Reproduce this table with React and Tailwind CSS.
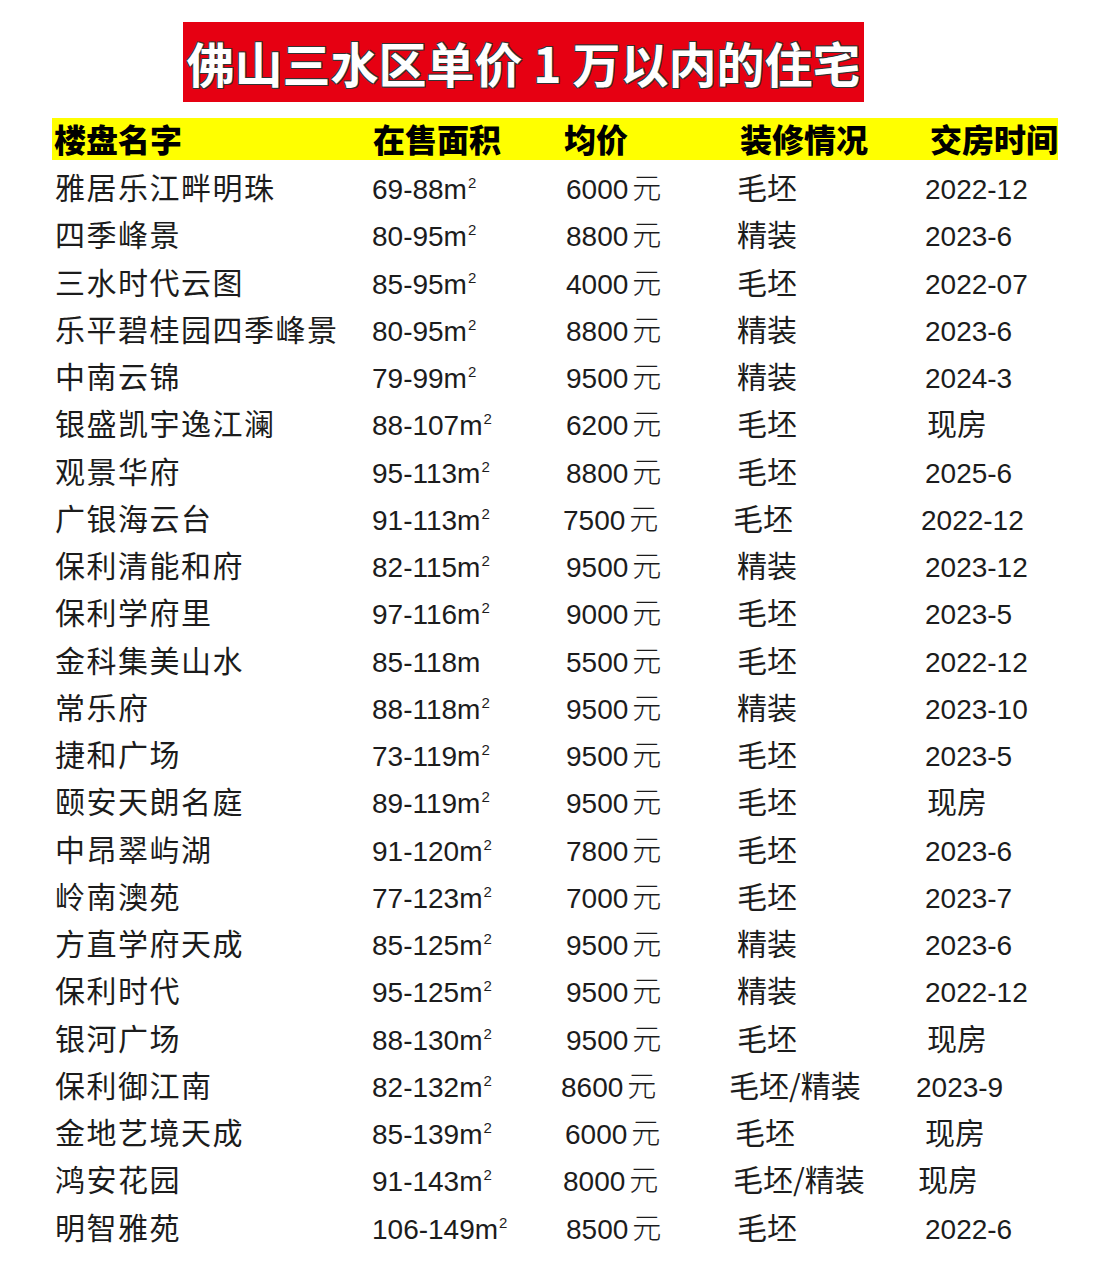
import React from 'react'

// 佛山三水区单价 1 万以内的住宅 — listing table
const rows = [
  { name: '雅居乐江畔明珠', area: '69-88m²', price: '6000', deco: '毛坯', date: '2022-12' },
  { name: '四季峰景', area: '80-95m²', price: '8800', deco: '精装', date: '2023-6' },
  { name: '三水时代云图', area: '85-95m²', price: '4000', deco: '毛坯', date: '2022-07' },
  { name: '乐平碧桂园四季峰景', area: '80-95m²', price: '8800', deco: '精装', date: '2023-6' },
  { name: '中南云锦', area: '79-99m²', price: '9500', deco: '精装', date: '2024-3' },
  { name: '银盛凯宇逸江澜', area: '88-107m²', price: '6200', deco: '毛坯', date: '现房', dateCls: 'ml-[2px]' },
  { name: '观景华府', area: '95-113m²', price: '8800', deco: '毛坯', date: '2025-6' },
  { name: '广银海云台', area: '91-113m²', price: '7500', deco: '毛坯', date: '2022-12', priceCls: '-ml-[3px]', decoCls: '-ml-[4px]', dateCls: '-ml-[4px]' },
  { name: '保利清能和府', area: '82-115m²', price: '9500', deco: '精装', date: '2023-12' },
  { name: '保利学府里', area: '97-116m²', price: '9000', deco: '毛坯', date: '2023-5' },
  { name: '金科集美山水', area: '85-118m', price: '5500', deco: '毛坯', date: '2022-12' },
  { name: '常乐府', area: '88-118m²', price: '9500', deco: '精装', date: '2023-10' },
  { name: '捷和广场', area: '73-119m²', price: '9500', deco: '毛坯', date: '2023-5' },
  { name: '颐安天朗名庭', area: '89-119m²', price: '9500', deco: '毛坯', date: '现房', dateCls: 'ml-[2px]' },
  { name: '中昂翠屿湖', area: '91-120m²', price: '7800', deco: '毛坯', date: '2023-6' },
  { name: '岭南澳苑', area: '77-123m²', price: '7000', deco: '毛坯', date: '2023-7' },
  { name: '方直学府天成', area: '85-125m²', price: '9500', deco: '精装', date: '2023-6' },
  { name: '保利时代', area: '95-125m²', price: '9500', deco: '精装', date: '2022-12' },
  { name: '银河广场', area: '88-130m²', price: '9500', deco: '毛坯', date: '现房', dateCls: 'ml-[2px]' },
  { name: '保利御江南', area: '82-132m²', price: '8600', deco: '毛坯/精装', date: '2023-9', priceCls: '-ml-[5px]', decoCls: '-ml-[8px]', dateCls: '-ml-[9px]' },
  { name: '金地艺境天成', area: '85-139m²', price: '6000', deco: '毛坯', date: '现房', priceCls: '-ml-[1px]', decoCls: '-ml-[2px]' },
  { name: '鸿安花园', area: '91-143m²', price: '8000', deco: '毛坯/精装', date: '现房', priceCls: '-ml-[3px]', decoCls: '-ml-[4px]', dateCls: '-ml-[7px]' },
  { name: '明智雅苑', area: '106-149m²', price: '8500', deco: '毛坯', date: '2022-6' },
]

const cjk = "font-['Noto_Sans_CJK_SC',sans-serif]"
const latin = "font-['Liberation_Sans','Noto_Sans_CJK_SC',sans-serif]"

function Area({ text }) {
  // keep the squared mark small and raised like the sheet
  if (!text.endsWith('²')) return text
  return (
    <>
      {text.slice(0, -1)}
      <span className="relative -top-[11px] text-[15px] ml-[1px]">2</span>
    </>
  )
}

export default function App() {
  return (
    <div className="w-[1117px] h-[1280px] bg-white text-[#1c1c1c] overflow-hidden">
      {/* Title */}
      <div className="pt-[22px] pl-[183px]">
        <div
          className={`w-[681px] h-[80px] bg-[#e60012] flex items-center justify-center text-white font-bold text-[48px] leading-none ${cjk} [text-shadow:1px_1px_0_#333,-1px_-1px_0_#333,1px_-1px_0_#333,-1px_1px_0_#333]`}
        >
          佛山三水区单价 1 万以内的住宅
        </div>
      </div>

      {/* Header */}
      <div className={`mt-[16px] ml-[52px] w-[1006px] h-[42px] bg-[#ffff00] flex items-center text-black font-black text-[32px] leading-none ${cjk}`}>
        <div className="w-[320px] pl-[2px] -mt-[3px]">楼盘名字</div>
        <div className="w-[192px] pl-[1px] -mt-[3px]">在售面积</div>
        <div className="w-[176px] -mt-[3px]">均价</div>
        <div className="w-[190px] -mt-[3px]">装修情况</div>
        <div className="-mt-[3px]">交房时间</div>
      </div>

      {/* Rows */}
      <div className="mt-[3px] ml-[55px]">
        {rows.map((r) => (
          <div key={r.name} className="h-[47.25px] pt-[5px] flex items-baseline leading-[36px]">
            <div className={`w-[317px] text-[30px] tracking-[1.5px] ${cjk}`}>{r.name}</div>
            <div className={`w-[194px] text-[28px] ${latin}`}>
              <Area text={r.area} />
            </div>
            <div className={`w-[171px] text-[28px] ${latin}`}>
              <div className={r.priceCls || ''}>
                {r.price}
                <span className={`text-[29px] ml-[4px] font-light ${cjk}`}>元</span>
              </div>
            </div>
            <div className={`w-[188px] text-[30px] ${cjk}`}>
              <div className={r.decoCls || ''}>{r.deco}</div>
            </div>
            <div className={`text-[28px] ${latin}`}>
              <div className={r.dateCls || ''}>
                {r.date === '现房' ? <span className={`text-[30px] ${cjk}`}>现房</span> : r.date}
              </div>
            </div>
          </div>
        ))}
      </div>
    </div>
  )
}
